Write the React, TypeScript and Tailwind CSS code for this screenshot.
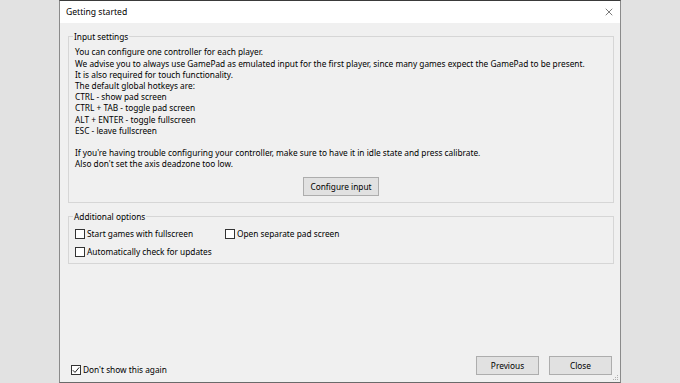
import { X } from 'lucide-react';

const lines = [
  'You can configure one controller for each player.',
  'We advise you to always use GamePad as emulated input for the first player, since many games expect the GamePad to be present.',
  'It is also required for touch functionality.',
  'The default global hotkeys are:',
  'CTRL - show pad screen',
  'CTRL + TAB - toggle pad screen',
  'ALT + ENTER - toggle fullscreen',
  'ESC - leave fullscreen',
];

function CheckBox({ label, checked = false }: { label: string; checked?: boolean }) {
  return (
    <label className="flex items-center gap-[2px] h-[18px]">
      <span className="w-[10px] h-[10px] border border-[#333] bg-white flex items-center justify-center">
        {checked && (
          <svg width="8" height="8" viewBox="0 0 8 8">
            <path d="M0.8 4.2 L3 6.4 L7.2 1.4" fill="none" stroke="#222" strokeWidth="1" />
          </svg>
        )}
      </span>
      <span>{label}</span>
    </label>
  );
}

function Button({ children, className = '' }: { children: React.ReactNode; className?: string }) {
  return (
    <button className={`h-[19px] bg-[#e1e1e1] border border-[#adadad] text-black flex items-center justify-center ${className}`}>
      {children}
    </button>
  );
}

export default function App() {
  return (
    <div
      className="w-[680px] h-[383px] bg-[#e2e2e2] pl-[59px] overflow-hidden text-[8.3px] leading-[11.4px] text-black"
      style={{ fontFamily: '"Noto Sans", "Open Sans", sans-serif' }}
    >
      <div className="relative w-[562px] h-[383px] border-x border-[#8a8a8a] border-t border-t-[#3a3a3a] border-b border-b-[#6a6a6a] flex flex-col">
        {/* Title bar */}
        <div className="h-[22px] bg-white flex items-center justify-between pl-[6px] pr-[5px] shrink-0">
          <span className="text-[8.6px] mt-[2px]">Getting started</span>
          <X className="w-[12px] h-[12px] text-[#333]" strokeWidth={1.3} />
        </div>

        {/* Body */}
        <div className="flex-1 bg-[#f0f0f0] flex flex-col">
          <fieldset className="mt-[8px] ml-[8px] mr-[6px] border border-[#d6d6d6] pl-[6px] pr-[6px] pt-[4px] pb-[6px] leading-[11.2px]">
            <legend className="px-[1px] -ml-[2px] leading-[11.4px]">Input settings</legend>
            {lines.map((l) => (
              <div key={l}>{l}</div>
            ))}
            <div className="h-[11.2px]" />
            <div>If you're having trouble configuring your controller, make sure to have it in idle state and press calibrate.</div>
            <div>Also don't set the axis deadzone too low.</div>
            <div className="flex justify-center mt-[7px]">
              <Button className="w-[76px]">Configure input</Button>
            </div>
          </fieldset>

          <fieldset className="mt-[8px] ml-[8px] mr-[6px] border border-[#d6d6d6] pl-[6px] pr-[6px] pt-[3px] pb-[2px]">
            <legend className="px-[1px] -ml-[2px]">Additional options</legend>
            <div className="flex">
              <div className="w-[150px]">
                <CheckBox label="Start games with fullscreen" />
              </div>
              <CheckBox label="Open separate pad screen" />
            </div>
            <CheckBox label="Automatically check for updates" />
          </fieldset>

          <div className="flex-1" />

          <div className="flex items-end justify-between pl-[11px] pr-[8px] pb-[7px]">
            <div className="-mb-[4px]">
              <CheckBox label="Don't show this again" checked />
            </div>
            <div className="flex gap-[10px]">
              <Button className="w-[63px]">Previous</Button>
              <Button className="w-[63px]">Close</Button>
            </div>
          </div>
        </div>

        {/* Resize grip */}
        <svg className="absolute right-[1px] bottom-[1px]" width="6" height="6" viewBox="0 0 6 6">
          <rect x="4" y="0" width="1" height="1" fill="#b0b0b0" />
          <rect x="2" y="2" width="1" height="1" fill="#b0b0b0" />
          <rect x="4" y="2" width="1" height="1" fill="#b0b0b0" />
          <rect x="0" y="4" width="1" height="1" fill="#b0b0b0" />
          <rect x="2" y="4" width="1" height="1" fill="#b0b0b0" />
          <rect x="4" y="4" width="1" height="1" fill="#b0b0b0" />
        </svg>
      </div>
    </div>
  );
}
